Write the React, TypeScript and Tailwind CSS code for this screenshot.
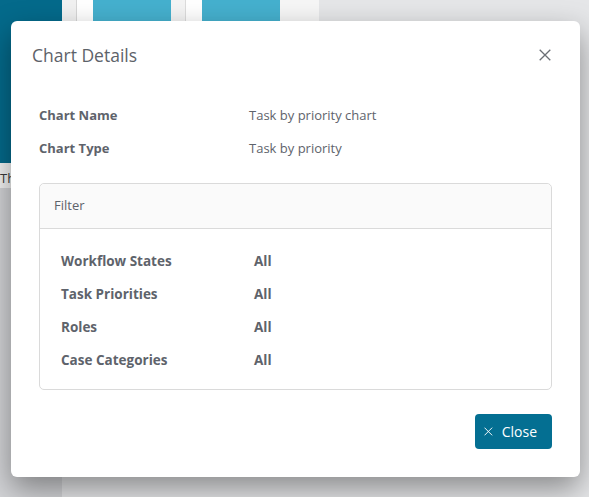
import React from "react";

const summary = [
  { label: "Chart Name", value: "Task by priority chart" },
  { label: "Chart Type", value: "Task by priority" },
];

const filters = [
  { label: "Workflow States", value: "All" },
  { label: "Task Priorities", value: "All" },
  { label: "Roles", value: "All" },
  { label: "Case Categories", value: "All" },
];

// thin cross that fills its box, like the reference close glyph
const CrossIcon: React.FC<{ className?: string }> = ({ className }) => (
  <svg viewBox="0 0 12 12" className={className} fill="none" stroke="currentColor" strokeWidth={1.3}>
    <path d="M0.7 0.7 L11.3 11.3 M11.3 0.7 L0.7 11.3" />
  </svg>
);

const Backdrop: React.FC = () => {
  return (
    <div className="flex h-full w-full bg-[#e5e6e8]">
      <div className="flex w-[62px] flex-col">
        <div className="h-[163px] bg-[#046a8b]" />
        <div className="flex h-[25px] items-end overflow-hidden bg-[#f3f3f3] pb-[1px]">
          <span className="text-[13px] leading-[18px] text-[#3a3a3a]">This</span>
        </div>
        <div className="flex-1 bg-[#d3d4d7]" />
      </div>
      <div className="h-[170px] w-[15px] border-r border-[#d6d6d6] bg-[#f1f1f1]" />
      <div className="flex h-[170px] w-[242px] bg-white">
        <div className="ml-[16px] h-full w-[78px] bg-[#45b0ce]" />
        <div className="w-[15px] border-r border-[#dcdcdc] bg-[#f4f4f4]" />
        <div className="ml-[16px] h-full w-[78px] bg-[#45b0ce]" />
        <div className="flex-1 bg-[#f6f6f6]" />
      </div>
    </div>
  );
};

const ChartDetailsModal: React.FC = () => {
  return (
    <div className="absolute left-[11px] top-[21px] flex h-[456px] w-[569px] flex-col rounded-md bg-white shadow-[0_12px_30px_rgba(0,0,0,0.4)]">
      <div className="flex items-center justify-between pl-[21px] pr-[29px] pt-[22px]">
        <h2 className="text-[17.5px] font-medium leading-[24px] text-[#5d6269]">Chart Details</h2>
        <button className="flex h-[24px] w-[12px] items-center justify-center text-[#6b6f75]">
          <CrossIcon className="h-[12px] w-[12px]" />
        </button>
      </div>

      <div className="mt-[32px] px-[28px]">
        {summary.map((row) => (
          <div key={row.label} className="flex h-[33px] items-center text-[13px] text-[#5e636b]">
            <span className="w-[210px] font-bold">{row.label}</span>
            <span>{row.value}</span>
          </div>
        ))}

        <div className="mt-[18px] rounded-[5px] border border-[#dadada]">
          <div className="flex h-[45px] items-center rounded-t-[5px] border-b border-[#dadada] bg-[#fafafa] pl-[14px] text-[13px] text-[#5e636b]">
            Filter
          </div>
          <div className="pb-[12px] pl-[21px] pt-[16px]">
            {filters.map((row) => (
              <div key={row.label} className="flex h-[33px] items-center text-[13.5px] font-bold text-[#5e636b]">
                <span className="w-[193px]">{row.label}</span>
                <span>{row.value}</span>
              </div>
            ))}
          </div>
        </div>

        <div className="mt-[24px] flex justify-end">
          <button className="flex h-[35px] w-[77px] items-center gap-[9px] rounded-[4px] bg-[#046f92] pl-[9px] pr-[15px] text-[14px] text-white">
            <CrossIcon className="h-[11px] w-[11px]" />
            <span>Close</span>
          </button>
        </div>
      </div>
    </div>
  );
};

const App: React.FC = () => {
  return (
    <div
      className="relative h-[497px] w-[589px] overflow-hidden"
      style={{ fontFamily: '"Open Sans", "Noto Sans", sans-serif' }}
    >
      <Backdrop />
      <ChartDetailsModal />
    </div>
  );
};

export default App;
